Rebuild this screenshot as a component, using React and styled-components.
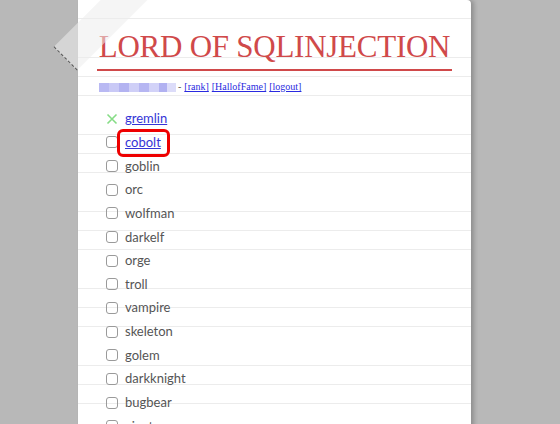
import styled, { createGlobalStyle } from 'styled-components';

const GlobalStyle = createGlobalStyle`
  html, body {
    margin: 0;
    padding: 0;
    background: #b8b8b8;
    overflow: hidden;
  }
`;

const stages = [
  'gremlin', 'cobolt', 'goblin', 'orc', 'wolfman', 'darkelf', 'orge',
  'troll', 'vampire', 'skeleton', 'golem', 'darkknight', 'bugbear', 'giant',
];

const Page = styled.div`
  width: 560px;
  height: 424px;
  padding-left: 78px;
  box-sizing: border-box;
`;

const Paper = styled.div`
  position: relative;
  width: 393px;
  min-height: 460px;
  background-color: #fff;
  background-image: repeating-linear-gradient(
    to bottom,
    transparent 0,
    transparent 18.3px,
    #ececec 18.3px,
    #ececec 19.25px
  );
  border-radius: 0 4px 0 0;
  box-shadow: 3px 0 4px rgba(0, 0, 0, 0.22);
  padding-top: 31px;
  box-sizing: border-box;
`;

const Tape = styled.div`
  position: absolute;
  left: -29px;
  top: 3px;
  width: 110px;
  height: 33px;
  background: rgba(236, 236, 236, 0.55);
  border-left: 1px dashed #555;
  transform: rotate(-45deg);
  pointer-events: none;
`;

const Header = styled.div`
  text-align: center;
`;

const Title = styled.h1`
  display: inline-block;
  margin: 0;
  padding: 0 2px 7px;
  font-family: "Liberation Serif", "Times New Roman", serif;
  font-weight: normal;
  font-size: 31px;
  line-height: 31px;
  letter-spacing: -0.25px;
  color: #d0494a;
  border-bottom: 2px solid #d0494a;
`;

const Info = styled.div`
  margin: 9px 0 0 21px;
  font-family: "Liberation Serif", "Times New Roman", serif;
  font-size: 10px;
  line-height: 14px;
  color: #555;
  display: flex;
  align-items: center;
`;

const Blurred = styled.span`
  display: inline-block;
  width: 77px;
  height: 9px;
  margin-right: 2px;
  background: linear-gradient(
    to right,
    #b9b9f3 0 10px,
    #c9c9f6 10px 20px,
    #b3b3f1 20px 30px,
    #cfcff7 30px 40px,
    #b6b6f2 40px 50px,
    #d2d2f8 50px 60px,
    #b1b1f1 60px 68px,
    #dcdcf9 68px 77px
  );
`;

const TopLink = styled.a`
  color: #2a2ae0;
  text-decoration: underline;
  margin-left: 3px;
`;

const List = styled.ul`
  list-style: none;
  margin: 13px 0 0;
  padding: 0 0 0 28px;
`;

const Row = styled.li`
  display: flex;
  align-items: center;
  height: 23.65px;
  font-family: Lato, "Open Sans", sans-serif;
  font-size: 13px;
  color: #555;
`;

const Check = styled.span`
  width: 12px;
  height: 12px;
  margin-right: 7px;
  box-sizing: border-box;
  border: 1px solid #9a9a9a;
  border-radius: 3px;
  flex: none;
`;

const Cross = styled.svg`
  width: 12px;
  height: 12px;
  margin-right: 7px;
  flex: none;
`;

const StageLink = styled.a`
  position: relative;
  display: inline-block;
  line-height: 17px;
  color: #3434d6;
  text-decoration: underline;

  ${({ $boxed }) => $boxed && `
    &::after {
      content: '';
      position: absolute;
      left: -8px;
      right: -9px;
      top: -5px;
      bottom: -6px;
      border: 3px solid #ee0000;
      border-radius: 6px;
    }
  `}
`;

const Label = styled.span`
  line-height: 17px;
`;

export default function App() {
  return (
    <>
      <GlobalStyle />
      <Page>
        <Paper>
          <Tape />
          <Header>
            <Title>LORD OF SQLINJECTION</Title>
          </Header>
          <Info>
            <Blurred /> -
            <TopLink href="#">[rank]</TopLink>
            <TopLink href="#">[HallofFame]</TopLink>
            <TopLink href="#">[logout]</TopLink>
          </Info>
          <List>
            {stages.map((name, i) => (
              <Row key={name}>
                {i === 0 ? (
                  <Cross viewBox="0 0 12 12">
                    <path d="M1.5 1.5 L10.5 10.5 M10.5 1.5 L1.5 10.5" stroke="#86dc86" strokeWidth="1.6" fill="none" />
                  </Cross>
                ) : (
                  <Check />
                )}
                {i < 2 ? (
                  <StageLink href="#" $boxed={i === 1}>{name}</StageLink>
                ) : (
                  <Label>{name}</Label>
                )}
              </Row>
            ))}
          </List>
        </Paper>
      </Page>
    </>
  );
}
